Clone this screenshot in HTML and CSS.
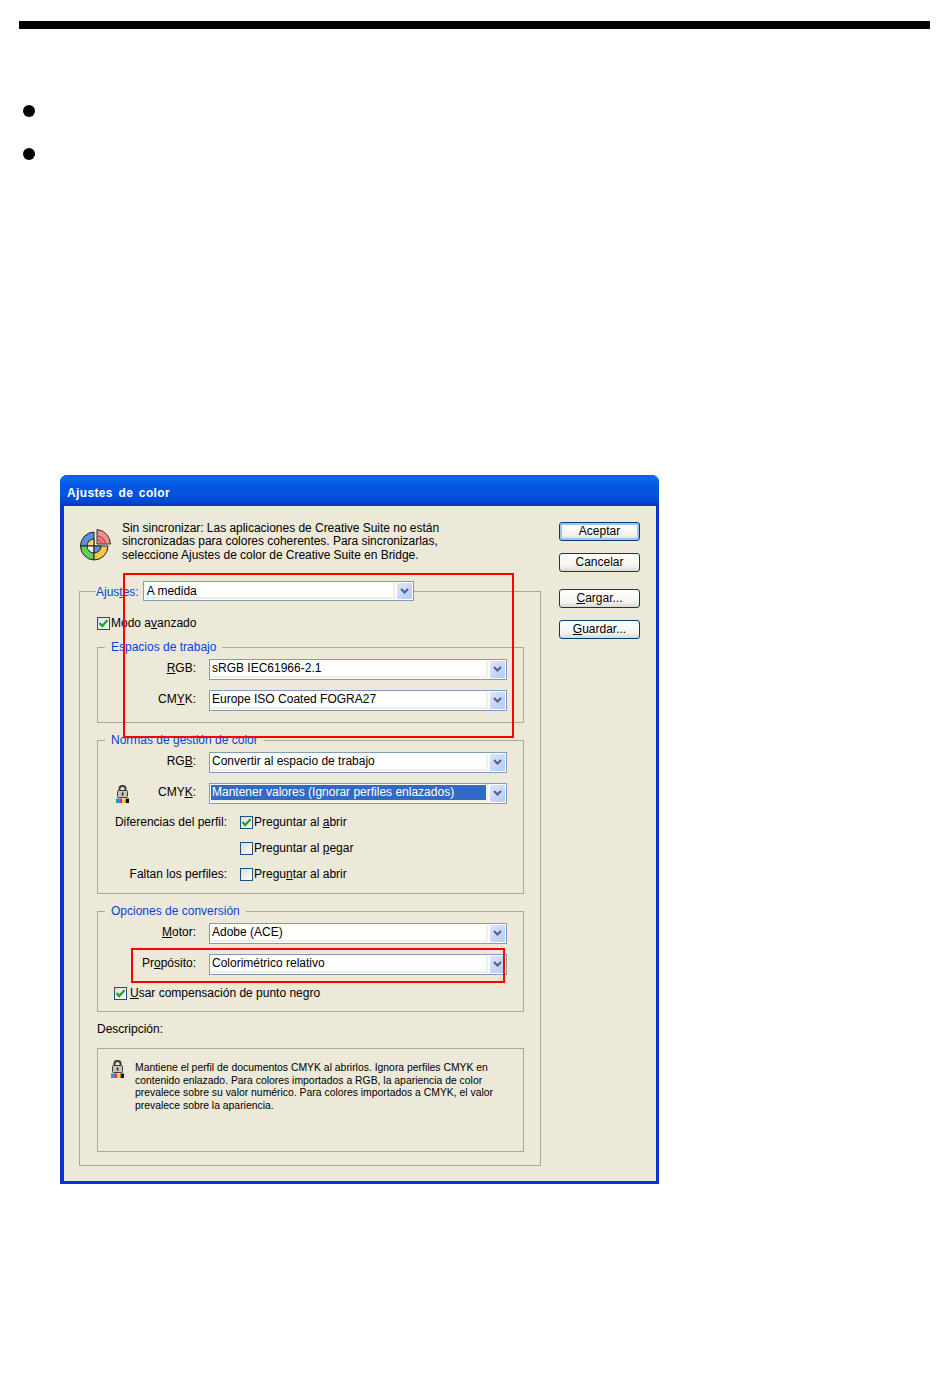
FILE: index.html
```html
<!DOCTYPE html>
<html lang="es">
<head>
  <meta charset="UTF-8">
  <meta name="viewport" content="width=device-width, initial-scale=1.0">
  <title>Ajustes de color</title>
  <link rel="stylesheet" href="styles.css">
</head>
<body>
  <svg class="defs" width="0" height="0">
    <symbol id="chevron" viewBox="0 0 9 7">
      <path d="M1 1 L4.5 4.5 L8 1" fill="none" stroke="#4d6185" stroke-width="2"/>
    </symbol>
    <symbol id="tick" viewBox="0 0 11 11">
      <path d="M1.5 5 L4.2 8 L9.5 2.2" fill="none" stroke="#21a121" stroke-width="2.2"/>
    </symbol>
    <symbol id="lock" viewBox="0 0 13 18">
      <path d="M3.5 6 V3.5 a3 2.6 0 0 1 6 0 V6" fill="none" stroke="#3f3f3a" stroke-width="2"/>
      <rect x="1.5" y="5.5" width="10" height="7" rx="1" fill="#c6c4ba" stroke="#3f3f3a"/>
      <rect x="5.8" y="7.5" width="1.6" height="3" fill="#222"/>
      <rect x="0" y="13.5" width="3.2" height="4.5" fill="#00a0e0"/>
      <rect x="3.2" y="13.5" width="3.2" height="4.5" fill="#e6218c"/>
      <rect x="6.4" y="13.5" width="3.2" height="4.5" fill="#ffe600"/>
      <rect x="9.6" y="13.5" width="3.4" height="4.5" fill="#111"/>
    </symbol>
  </svg>

  <div class="top-rule"></div>
  <ul class="bullets">
    <li></li>
    <li></li>
  </ul>

  <div class="dialog">
    <div class="titlebar">Ajustes de color</div>
    <div class="dialog-body">
      <div class="main-col">
        <div class="intro">
          <svg class="wheel" width="31" height="33" viewBox="0 0 31 33">
            <path d="M14 17 V3 A14 14 0 0 0 0.5 17 Z" fill="#5b8edb" stroke="#222"/>
            <path d="M14 17 H0.5 A14 14 0 0 0 14 31 Z" fill="#62d05c" stroke="#222"/>
            <path d="M14 17 V31 A14 14 0 0 0 28 17 Z" fill="#f1c64a" stroke="#222"/>
            <path d="M14 17 V10 A7 7 0 0 0 7 17 Z" fill="#f5d566" stroke="#222"/>
            <path d="M14 17 H7 A7 7 0 0 0 14 24 Z" fill="#f4f2ea" stroke="#222"/>
            <path d="M14 17 V24 A7 7 0 0 0 21 17 Z" fill="#5b8edb" stroke="#222"/>
            <path d="M17 15 V0.5 A15 15 0 0 1 30.5 15 Z" fill="#f08f8f" stroke="#333"/>
            <path d="M17 7 A8 8 0 0 1 25 15 M17 10.5 A4.5 4.5 0 0 1 21.5 15" fill="none" stroke="#d0454f" stroke-width="1.5"/>
          </svg>
          <p class="intro-text">Sin sincronizar: Las aplicaciones de Creative Suite no están<br>sincronizadas para colores coherentes. Para sincronizarlas,<br>seleccione Ajustes de color de Creative Suite en Bridge.</p>
        </div>

        <fieldset class="group group-main">
          <legend class="main-legend">
            <span class="blue">Ajus<u>t</u>es:</span>
            <span class="select select-top"><span class="field">A medida</span><span class="arrow"><svg width="9" height="7"><use href="#chevron"/></svg></span></span>
          </legend>

          <label class="check"><span class="box"><svg width="11" height="11"><use href="#tick"/></svg></span><span>Modo a<u>v</u>anzado</span></label>

          <fieldset class="group">
            <legend>Espacios de trabajo</legend>
            <div class="row">
              <span class="row-label"><span><u>R</u>GB:</span></span>
              <span class="select"><span class="field">sRGB IEC61966-2.1</span><span class="arrow"><svg width="9" height="7"><use href="#chevron"/></svg></span></span>
            </div>
            <div class="row">
              <span class="row-label"><span>CM<u>Y</u>K:</span></span>
              <span class="select"><span class="field">Europe ISO Coated FOGRA27</span><span class="arrow"><svg width="9" height="7"><use href="#chevron"/></svg></span></span>
            </div>
          </fieldset>

          <fieldset class="group group-policies">
            <legend>Normas de gestión de color</legend>
            <div class="row">
              <span class="row-label"><span>RG<u>B</u>:</span></span>
              <span class="select"><span class="field">Convertir al espacio de trabajo</span><span class="arrow"><svg width="9" height="7"><use href="#chevron"/></svg></span></span>
            </div>
            <div class="row">
              <span class="row-label row-label-lock"><svg class="lock" width="13" height="18"><use href="#lock"/></svg><span>CMY<u>K</u>:</span></span>
              <span class="select"><span class="field"><span class="selected">Mantener valores (Ignorar perfiles enlazados)</span></span><span class="arrow"><svg width="9" height="7"><use href="#chevron"/></svg></span></span>
            </div>
            <div class="check-row first">
              <span class="check-label">Diferencias del perfil:</span>
              <label class="check"><span class="box"><svg width="11" height="11"><use href="#tick"/></svg></span><span>Preguntar al <u>a</u>brir</span></label>
            </div>
            <div class="check-row second">
              <span class="check-label"></span>
              <label class="check"><span class="box"></span><span>Preguntar al <u>p</u>egar</span></label>
            </div>
            <div class="check-row third">
              <span class="check-label">Faltan los perfiles:</span>
              <label class="check"><span class="box"></span><span>Pregu<u>n</u>tar al abrir</span></label>
            </div>
          </fieldset>

          <fieldset class="group group-conversion">
            <legend>Opciones de conversión</legend>
            <div class="row">
              <span class="row-label"><span><u>M</u>otor:</span></span>
              <span class="select"><span class="field">Adobe (ACE)</span><span class="arrow"><svg width="9" height="7"><use href="#chevron"/></svg></span></span>
            </div>
            <div class="row">
              <span class="row-label"><span>Pr<u>o</u>pósito:</span></span>
              <span class="select"><span class="field">Colorimétrico relativo</span><span class="arrow"><svg width="9" height="7"><use href="#chevron"/></svg></span></span>
            </div>
            <label class="check check-black"><span class="box"><svg width="11" height="11"><use href="#tick"/></svg></span><span><u>U</u>sar compensación de punto negro</span></label>
          </fieldset>

          <div class="desc-title">Descripción:</div>
          <div class="desc-box">
            <svg class="lock" width="13" height="18"><use href="#lock"/></svg>
            <p class="desc-text">Mantiene el perfil de documentos CMYK al abrirlos. Ignora perfiles CMYK en<br>contenido enlazado. Para colores importados a RGB, la apariencia de color<br>prevalece sobre su valor numérico. Para colores importados a CMYK, el valor<br>prevalece sobre la apariencia.</p>
          </div>
        </fieldset>
      </div>

      <div class="side-col">
        <button class="btn btn-default">Aceptar</button>
        <button class="btn">Cancelar</button>
        <button class="btn btn-split"><span><u>C</u>argar...</span></button>
        <button class="btn"><span><u>G</u>uardar...</span></button>
      </div>
    </div>

    <div class="redbox redbox-top"></div>
    <div class="redbox redbox-bottom"></div>
  </div>
</body>
</html>
```

FILE: styles.css
```css
body {
  font-family: 'Liberation Sans', Arial, sans-serif;
  margin: 0;
  padding: 0;
  background-color: white;
  color: black;
  font-size: 12px;
}

.defs {
  display: block;
  height: 0;
}

.top-rule {
  height: 8px;
  margin: 21px 20px 0 19px;
  background-color: black;
}

.bullets {
  list-style: none;
  margin: 76px 0 0 23px;
  padding: 0;
}

.bullets li {
  width: 12px;
  height: 12px;
  margin-bottom: 31px;
  border-radius: 50%;
  background-color: black;
}

.dialog {
  position: relative;
  box-sizing: border-box;
  width: 599px;
  height: 709px;
  margin: 315px 0 0 60px;
  border: solid #0734cf;
  border-width: 0 3px 3px 4px;
  border-radius: 7px 7px 0 0;
  background-color: #ece9d8;
}

.titlebar {
  height: 31px;
  margin: 0 -3px 0 -4px;
  padding-left: 7px;
  border-radius: 7px 7px 0 0;
  background: linear-gradient(to bottom, #0a5be0 0, #0a6cf5 3px, #0458e4 9px, #0353e0 20px, #0345cf 27px, #0339bd 31px);
  color: white;
  font-weight: bold;
  font-size: 12px;
  letter-spacing: 0.35px;
  word-spacing: 2px;
  line-height: 37px;
}

.dialog-body {
  display: flex;
  gap: 18px;
  padding: 14px 0 0 15px;
}

.main-col {
  width: 462px;
}

.intro {
  display: flex;
  gap: 11px;
  margin-bottom: 19px;
  padding-left: 1px;
}

.wheel {
  flex: none;
  margin-top: 9px;
}

.intro-text {
  margin: 1.5px 0 0;
  line-height: 13.5px;
  letter-spacing: -0.03px;
}

.group {
  margin: 10px 0 0;
  padding: 5px 16px 11px 0;
  border: 1px solid #aca899;
  min-width: 0;
}

.group legend {
  margin-left: 7px;
  padding: 0 6px;
  color: #0046d5;
  line-height: 14px;
}

.group-main {
  margin: 0;
  padding: 16px 16px 13px 17px;
}

.group .main-legend {
  display: flex;
  align-items: center;
  gap: 4px;
  height: 20px;
  margin-left: -1px;
  padding: 0;
}

.blue {
  color: #0046d5;
  margin-top: 2px;
  line-height: 18px;
}

.group-policies {
  padding-bottom: 12px;
}

.row {
  display: flex;
  align-items: center;
  gap: 13px;
  margin-bottom: 10px;
}

.row:last-of-type {
  margin-bottom: 0;
}

.row-label {
  box-sizing: border-box;
  display: flex;
  justify-content: flex-end;
  align-items: center;
  width: 98px;
}

.row-label > span {
  margin-top: -3px;
}

.row-label-lock {
  justify-content: space-between;
  padding-left: 18px;
}

.lock {
  flex: none;
}

.select {
  box-sizing: border-box;
  display: flex;
  align-items: stretch;
  width: 298px;
  height: 21px;
  padding: 1px 1px 1px 1px;
  border: 1px solid #7f9db9;
  background-color: white;
  color: black;
  line-height: 15px;
  font-weight: normal;
}

.select-top {
  width: 271px;
  height: 20px;
}

.select-top .field {
  padding: 1px 0 0 2px;
}

.field {
  flex: 1;
  min-width: 0;
  padding-left: 1px;
  border: solid #f1efe2;
  border-width: 0 2px 2px 0;
  white-space: nowrap;
}

.selected {
  display: block;
  height: 15px;
  margin-left: -1px;
  padding-left: 1px;
  background-color: #316ac5;
  color: white;
}

.arrow {
  display: flex;
  justify-content: center;
  align-items: center;
  flex: none;
  width: 15px;
  margin-left: 2px;
  border-radius: 1px;
  background: linear-gradient(135deg, #dde7fc, #b4c8f6);
}

.check {
  display: flex;
  align-items: center;
  gap: 1px;
  height: 13px;
  line-height: 13px;
}

.box {
  box-sizing: border-box;
  display: flex;
  justify-content: center;
  align-items: center;
  flex: none;
  width: 13px;
  height: 13px;
  border: 1px solid #1c5180;
  background: linear-gradient(135deg, #dcdcd7, #ffffff);
}

.check-row {
  display: flex;
  align-items: center;
  gap: 13px;
}

.check-row.first {
  margin-top: 12px;
}

.check-row.second {
  margin-top: 13px;
}

.check-row.third {
  margin-top: 13px;
}

.check-label {
  width: 129px;
  text-align: right;
  margin-top: -2px;
}

.check-black {
  margin: 12px 0 0 16px;
  gap: 3px;
}

.desc-title {
  margin-top: 10px;
  line-height: 14px;
}

.desc-box {
  box-sizing: border-box;
  display: flex;
  gap: 11px;
  height: 104px;
  margin-top: 12px;
  padding: 11px 0 0 13px;
  border: 1px solid #aca899;
}

.desc-text {
  margin: 2px 0 0;
  font-size: 10.4px;
  line-height: 12.5px;
}

.side-col {
  display: flex;
  flex-direction: column;
  margin-top: 2px;
}

.btn {
  box-sizing: border-box;
  width: 81px;
  height: 19px;
  margin: 0 0 12px;
  padding: 0;
  border: 1px solid #003c74;
  border-radius: 3px;
  background: linear-gradient(to bottom, #ffffff, #f4f3ee 70%, #dcd8cc);
  font-family: inherit;
  font-size: 12px;
  line-height: 15px;
  color: black;
}

.btn-default {
  box-shadow: inset 0 0 0 2px #a9c2ec;
}

.btn-split {
  margin-top: 5px;
}

.redbox {
  position: absolute;
  box-sizing: border-box;
  border: 2px solid #f00;
  pointer-events: none;
}

.redbox-top {
  left: 59px;
  top: 98px;
  width: 391px;
  height: 165px;
}

.redbox-bottom {
  left: 67px;
  top: 473px;
  width: 374px;
  height: 35px;
}
```
